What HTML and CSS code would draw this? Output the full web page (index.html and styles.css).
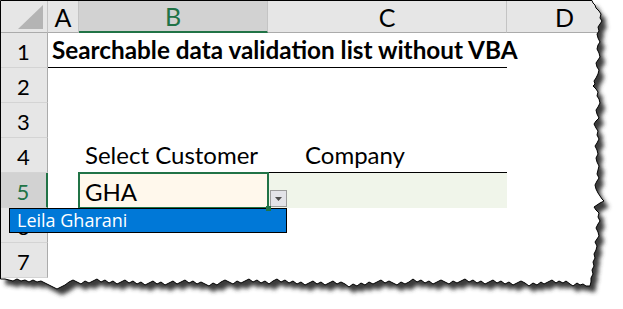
FILE: index.html
```html
<!DOCTYPE html>
<html>
<head>
<meta charset="utf-8">
<link rel="stylesheet" href="styles.css">
</head>
<body>
<div class="sheet">
  <div class="grid">
    <div class="corner"><svg class="tri" width="48" height="33" viewBox="0 0 48 33"><polygon points="43,5 43,29 18,29" fill="#b4b4b4"/></svg></div>
    <div class="ch">A</div>
    <div class="ch sel">B</div>
    <div class="ch">C</div>
    <div class="ch">D</div>

    <div class="rh">1</div>
    <div class="c title">Searchable data validation list without VBA</div>
    <div class="c"></div>

    <div class="rh">2</div>
    <div class="c"></div><div class="c"></div><div class="c"></div><div class="c"></div>

    <div class="rh">3</div>
    <div class="c"></div><div class="c"></div><div class="c"></div><div class="c"></div>

    <div class="rh">4</div>
    <div class="c"></div>
    <div class="c lbl">Select Customer</div>
    <div class="c lbl company">Company</div>
    <div class="c"></div>

    <div class="rh sel">5</div>
    <div class="c"></div>
    <div class="c active">GHA</div>
    <div class="c green"></div>
    <div class="c"></div>

    <div class="rh">6</div>
    <div class="c"></div><div class="c"></div><div class="c"></div><div class="c"></div>

    <div class="rh">7</div>
    <div class="c"></div><div class="c"></div><div class="c"></div><div class="c"></div>
  </div>

  <div class="dd-btn"><svg width="15" height="15" viewBox="0 0 15 15"><polygon points="4,6 11,6 7.5,10" fill="#4d4d4d"/></svg></div>
  <div class="listbox">Leila Gharani</div>

  <svg class="torn" width="623" height="309" viewBox="0 0 623 309">
    <defs>
      <filter id="blur" x="-10%" y="-10%" width="120%" height="120%"><feGaussianBlur stdDeviation="2"/></filter>
      <path id="edge" d="M0.5,0.5 L592,0.5 L593,3 L595,5 L596,8 L599,11 L601,14 L600,18 L602,21 L600,24 L598,27 L599,31 L597,34 L598,38 L600,42 L598,45 L597,49 L599,53 L600,57 L598,60 L596,63 L597,67 L599,70 L598,74 L596,78 L594,81 L595,84 L593,86 L596,89 L598,92 L597,96 L599,99 L600,103 L598,107 L596,110 L597,114 L599,118 L596,121 L594,124 L596,128 L598,131 L597,135 L599,139 L597,143 L595,146 L597,150 L598,154 L596,158 L597,162 L599,166 L598,170 L597,174 L599,178 L597,181 L595,185 L596,189 L598,193 L600,196 L602,199 L604,201 L600,203 L597,205 L594,207 L596,210 L599,213 L598,217 L600,221 L598,224 L596,228 L598,232 L599,236 L597,239 L595,242 L597,246 L596,250 L594,254 L595,258 L593,262 L594,266 L592,270 L593,274 L591,278 L591,282 L590,286 L586,286 L583,284 L580,285 L577,283 L573,286 L570,284 L566,281 L563,283 L559,281 L556,283 L552,280 L548,282 L544,284 L541,282 L537,285 L533,283 L529,286 L525,283 L521,281 L517,283 L513,285 L509,282 L505,284 L501,281 L497,283 L493,280 L489,282 L485,284 L481,281 L477,283 L473,280 L469,282 L465,279 L461,281 L457,283 L453,281 L449,284 L445,282 L441,280 L437,282 L433,284 L429,281 L425,283 L421,280 L417,282 L413,279 L409,282 L405,284 L401,282 L397,285 L393,283 L389,281 L385,283 L381,280 L377,282 L373,284 L369,282 L365,285 L361,283 L357,286 L353,284 L349,287 L345,284 L341,282 L337,284 L333,281 L329,283 L325,285 L321,282 L317,284 L313,281 L309,283 L305,285 L301,282 L297,284 L293,281 L289,283 L285,280 L281,282 L277,279 L273,281 L269,284 L265,281 L261,283 L257,280 L253,282 L249,279 L245,281 L241,283 L237,281 L233,284 L229,282 L225,280 L221,282 L217,285 L213,283 L209,286 L205,284 L201,282 L197,284 L193,281 L189,283 L185,280 L181,282 L177,284 L173,281 L169,283 L165,285 L161,282 L157,284 L153,281 L149,283 L145,285 L141,282 L137,284 L133,281 L129,283 L125,280 L121,282 L117,284 L113,281 L109,283 L105,280 L101,282 L97,279 L93,281 L89,283 L85,281 L81,284 L77,282 L73,280 L69,282 L65,285 L61,287 L57,289 L53,287 L49,285 L45,283 L41,281 L37,282 L33,280 L29,282 L25,280 L21,281 L17,279 L13,281 L9,280 L5,279 L0.5,279 Z"/>
      <mask id="outside" maskUnits="userSpaceOnUse" x="0" y="0" width="623" height="309">
        <rect x="0" y="0" width="623" height="309" fill="#fff"/>
        <use href="#edge" fill="#000"/>
      </mask>
    </defs>
    <rect x="0" y="0" width="623" height="309" fill="#fff" mask="url(#outside)"/>
    <g mask="url(#outside)">
      <use href="#edge" fill="#3a3a3a" transform="translate(5,6)" filter="url(#blur)"/>
    </g>
    <use href="#edge" fill="none" stroke="#000" stroke-width="1"/>
  </svg>
</div>
</body>
</html>
```

FILE: styles.css
```css
* { box-sizing: border-box; }

body {
  margin: 0;
  background: #fff;
  font-family: Lato, "Open Sans", sans-serif;
  color: #000;
}

.sheet {
  position: relative;
  width: 623px;
  height: 309px;
  overflow: hidden;
  background: #fff;
}

.grid {
  display: grid;
  grid-template-columns: 48px 31px 189px 239px 116px;
  grid-template-rows: 33px repeat(7, 35px);
}

.corner {
  background: #e6e6e6;
  border-right: 1px solid #c4c4c4;
  border-bottom: 1px solid #ababab;
}

.tri { display: block; }

.ch {
  background: #e6e6e6;
  border-right: 1px solid #c4c4c4;
  border-bottom: 1px solid #ababab;
  display: flex;
  align-items: center;
  justify-content: center;
  font-family: Lato, "Open Sans", sans-serif;
  font-size: 25px;
  padding-top: 1px;
}

.ch.sel {
  background: #d2d2d2;
  color: #217346;
  border-bottom: 2px solid #217346;
}

.rh {
  background: #e6e6e6;
  border-right: 1px solid #ababab;
  border-bottom: 1px solid #d4d4d4;
  display: flex;
  align-items: center;
  justify-content: center;
  font-size: 22px;
  padding-top: 2px;
}

.rh.sel {
  background: #d2d2d2;
  color: #217346;
  border-right: 2px solid #217346;
}

.c {
  display: flex;
  align-items: flex-end;
  padding: 0 0 3px 6px;
  font-size: 24px;
  white-space: nowrap;
}

.title {
  grid-column: 2 / 5;
  padding-left: 4px;
  padding-bottom: 3px;
  font-weight: 700;
  font-size: 24.3px;
  border-bottom: 1px solid #000;
  overflow: visible;
}

.lbl {
  border-bottom: 1px solid #000;
}

.company {
  padding-left: 37px;
}

.active {
  position: relative;
  background: #fff8ec;
  padding-bottom: 2px;
}

.active::after {
  content: "";
  position: absolute;
  left: -1px;
  top: -1px;
  right: -1px;
  bottom: -1px;
  border: 2px solid #217346;
}

.active::before {
  content: "";
  position: absolute;
  right: -3px;
  bottom: -3px;
  width: 5px;
  height: 5px;
  background: #217346;
  z-index: 1;
}

.green {
  background: #f0f5ea;
}

.dd-btn {
  position: absolute;
  left: 270px;
  top: 190px;
  width: 17px;
  height: 17px;
  background: #e3e3e8;
  border: 1px solid #9c9c9c;
}

.dd-btn svg { display: block; }

.listbox {
  position: absolute;
  left: 9px;
  top: 208px;
  width: 278px;
  height: 25px;
  background: #0078d7;
  border: 1px solid #000;
  color: #fff;
  font-family: "Open Sans", "Noto Sans", sans-serif;
  font-size: 18px;
  line-height: 22px;
  padding-left: 7px;
}

.torn {
  position: absolute;
  left: 0;
  top: 0;
  pointer-events: none;
}
```
